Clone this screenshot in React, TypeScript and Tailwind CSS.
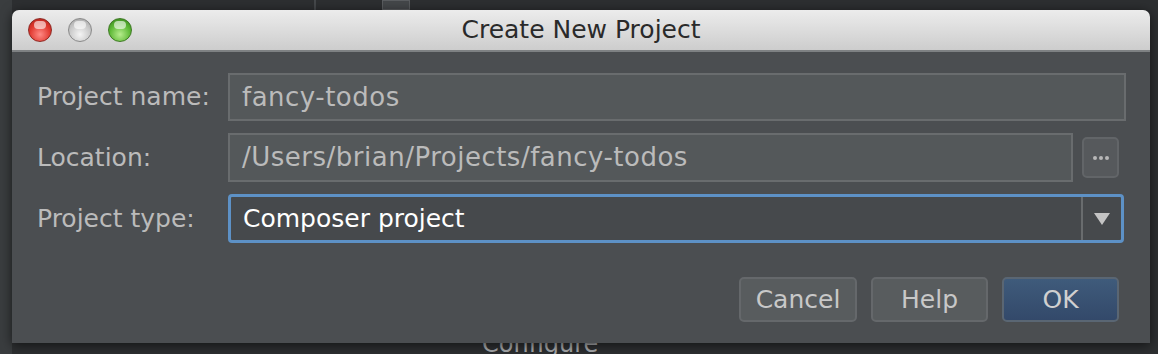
const font = { fontFamily: '"DejaVu Sans", "Lucida Grande", sans-serif' };

function Light({ kind }: { kind: "red" | "gray" | "green" }) {
  const fill =
    kind === "red"
      ? "bg-[radial-gradient(circle_at_50%_70%,#ff8a85_0%,#e0382f_55%,#a91c16_100%)] border-[#8e2a24]"
      : kind === "green"
        ? "bg-[radial-gradient(circle_at_50%_70%,#b6ec8c_0%,#5db835_55%,#2f7a16_100%)] border-[#3f7a25]"
        : "bg-[radial-gradient(circle_at_50%_70%,#f4f4f4_0%,#c9c9c9_55%,#9a9a9a_100%)] border-[#8a8a8a]";
  return (
    <div className={`relative h-[24px] w-[24px] rounded-full border ${fill}`}>
      <div className="absolute left-[5px] top-[2px] h-[8px] w-[12px] rounded-full bg-white/60" />
    </div>
  );
}

function Field({ label, children }: { label: string; children: React.ReactNode }) {
  return (
    <>
      <div className="flex items-center text-[25px] text-[#bbbbbb]">{label}</div>
      {children}
    </>
  );
}

export default function App() {
  return (
    <div
      className="relative h-[354px] w-[1158px] overflow-hidden bg-[#2d2f31] pl-[12px] pt-[10px]"
      style={font}
    >
      {/* IDE behind the dialog */}
      <div className="absolute left-0 top-0 h-full w-[12px] bg-[#3a3d3f]" />
      <div className="absolute left-[382px] top-0 h-[10px] w-[28px] border border-[#5a5d60] bg-[#44474a]" />
      <div className="absolute left-[314px] top-0 h-[10px] w-[2px] bg-[#45484b]" />
      <div className="absolute left-[482px] top-[329px] text-[24px] leading-[30px] text-[#a9abad]">Configure</div>

      <div className="relative flex h-[333px] w-[1138px] flex-col overflow-hidden rounded-t-[7px] shadow-[0_2px_12px_rgba(0,0,0,0.6)]">
        <div className="relative flex h-[42px] items-center border-b-2 border-[#7e8183] bg-gradient-to-b from-[#ececec] to-[#cdcdcd] pl-[16px]">
          <div className="flex gap-[16px]">
            <Light kind="red" />
            <Light kind="gray" />
            <Light kind="green" />
          </div>
          <div className="absolute inset-0 flex items-center justify-center text-[25px] text-[#2a2a2a]">
            Create New Project
          </div>
        </div>

        <div className="flex flex-1 flex-col bg-[#4b4e51] pl-[25px] pr-[24px] pt-[21px]">
          <div className="grid grid-cols-[191px_1fr] gap-y-[12px]">
            <Field label="Project name:">
              <div className="flex h-[48px] items-center border-2 border-[#696c6e] bg-[#54585a] px-[12px] text-[26px] tracking-[0.5px] text-[#bbbbbb]">
                fancy-todos
              </div>
            </Field>
            <Field label="Location:">
              <div className="flex h-[49px] items-center gap-[9px]">
                <div className="flex h-full flex-1 items-center border-2 border-[#696c6e] bg-[#54585a] px-[12px] text-[26px] tracking-[0.5px] text-[#bbbbbb]">
                  /Users/brian/Projects/fancy-todos
                </div>
                <div className="mr-[7px] flex h-[41px] w-[37px] items-center justify-center gap-[2px] rounded-[5px] border-2 border-[#626568] bg-[#56595c]">
                  <span className="h-[4px] w-[4px] rounded-full bg-[#b8b8b8]" />
                  <span className="h-[4px] w-[4px] rounded-full bg-[#b8b8b8]" />
                  <span className="h-[4px] w-[4px] rounded-full bg-[#b8b8b8]" />
                </div>
              </div>
            </Field>
            <Field label="Project type:">
              <div className="mr-[2px] flex h-[49px] items-stretch rounded-[4px] border-[3px] border-[#5d91c6] bg-[#46494c] text-[25px] text-white">
                <div className="flex flex-1 items-center px-[12px]">Composer project</div>
                <div className="flex w-[40px] items-center justify-center border-l-2 border-[#696c6e]">
                  <svg width="18" height="14" viewBox="0 0 18 14">
                    <path d="M1 1 L17 1 L9 13 Z" fill="#c4c4c4" />
                  </svg>
                </div>
              </div>
            </Field>
          </div>

          <div className="mt-[34px] flex justify-end gap-[14px] pr-[7px] text-[25px]">
            <button className="h-[45px] w-[118px] rounded-[5px] border-2 border-[#65686b] bg-[#585c5e] text-[#c8c8c8]">
              Cancel
            </button>
            <button className="h-[45px] w-[117px] rounded-[5px] border-2 border-[#65686b] bg-[#585c5e] text-[#c8c8c8]">
              Help
            </button>
            <button className="h-[45px] w-[117px] rounded-[5px] border-2 border-[#5a6673] bg-gradient-to-b from-[#3f5b7b] to-[#33496a] text-[#d0d0d0]">
              OK
            </button>
          </div>
        </div>
      </div>
    </div>
  );
}
